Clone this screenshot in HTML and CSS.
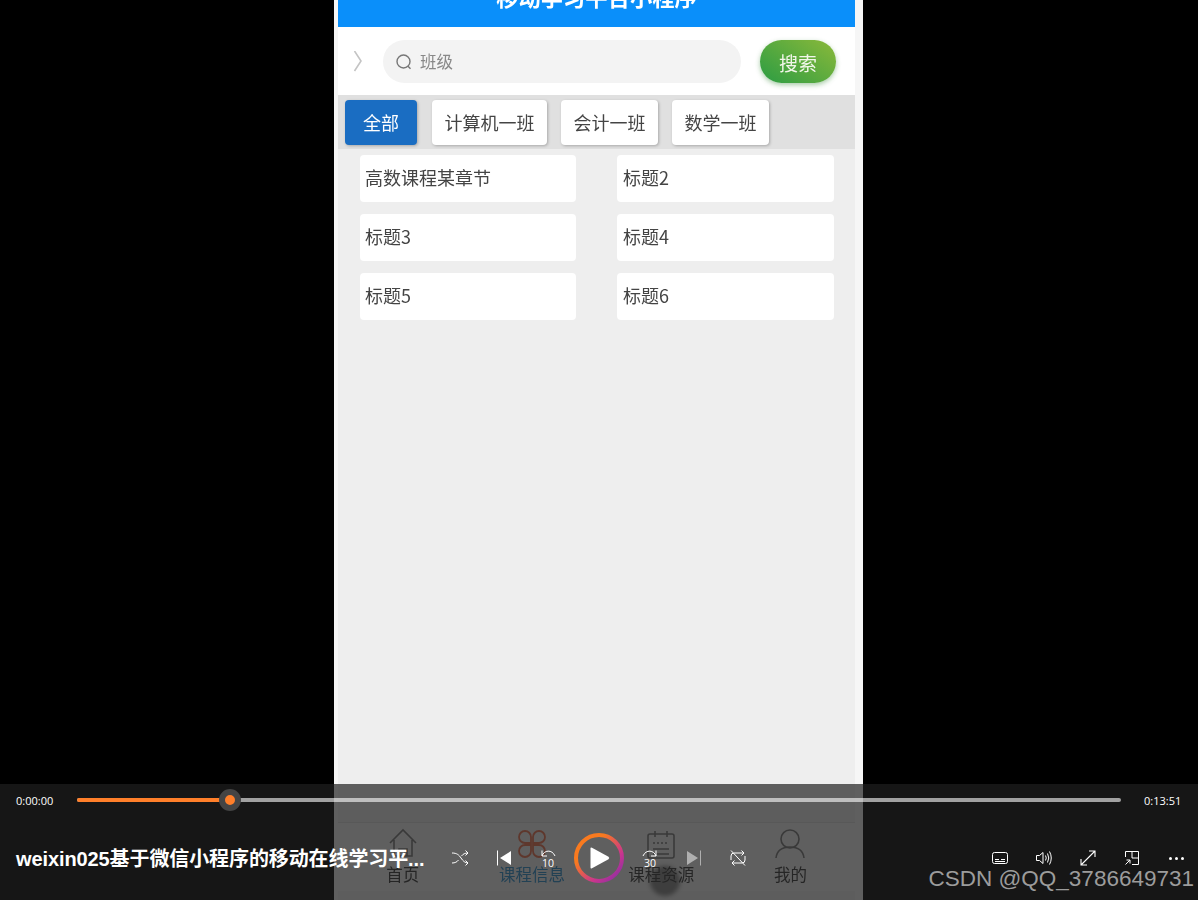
FILE: index.html
```html
<!DOCTYPE html>
<html lang="zh">
<head>
    <meta charset="UTF-8">
    <meta name="viewport" content="width=device-width, initial-scale=1.0">
    <title>weixin025</title>
    <link rel="stylesheet" href="styles.css">
</head>
<body>

<div class="video">
    <div class="phone">
        <div class="screen">
            <header class="app-title"><span>移动学习平台小程序</span></header>

            <div class="search-row">
                <span class="chevron">
                    <svg width="10" height="22" viewBox="0 0 10 22"><path d="M1.5 0 L8 10 L1.5 20" fill="none" stroke="#c4c4c4" stroke-width="1.6"/></svg>
                </span>
                <div class="search-box">
                    <svg width="18" height="18" viewBox="0 0 18 18"><circle cx="8.5" cy="8.5" r="6.5" fill="none" stroke="#777" stroke-width="1.4"/><path d="M13 13.2 L15.5 15.8" stroke="#777" stroke-width="1.4"/></svg>
                    <span class="placeholder">班级</span>
                </div>
                <div class="search-btn">搜索</div>
            </div>

            <div class="tabs">
                <div class="tab active">全部</div>
                <div class="tab tab-5">计算机一班</div>
                <div class="tab tab-4a">会计一班</div>
                <div class="tab tab-4b">数学一班</div>
            </div>

            <div class="course-grid">
                <div class="course">高数课程某章节</div>
                <div class="course">标题2</div>
                <div class="course">标题3</div>
                <div class="course">标题4</div>
                <div class="course">标题5</div>
                <div class="course">标题6</div>
            </div>

            <nav class="tabbar">
                <div class="float-dot"></div>
                <div class="tabbar-item">
                    <svg width="34" height="34" viewBox="0 0 34 34"><path d="M4 15 L17 2 L30 15 M8 12 V28 H26 V12 M13 28 V21 H21 V28" fill="none" stroke="#777" stroke-width="1.6"/></svg>
                    <span>首页</span>
                </div>
                <div class="tabbar-item current">
                    <svg width="34" height="34" viewBox="0 0 34 34"><g fill="none" stroke="#f0704c" stroke-width="1.8"><path d="M16 15 H10 A6 6 0 1 1 16 9 Z"/><path d="M18 15 V9 A6 6 0 1 1 24 15 Z"/><path d="M16 17 V23 A6 6 0 1 1 10 17 Z"/><path d="M18 17 H24 A6 6 0 1 1 18 23 Z"/></g></svg>
                    <span>课程信息</span>
                </div>
                <div class="tabbar-item">
                    <svg width="34" height="34" viewBox="0 0 34 34"><g fill="none" stroke="#777" stroke-width="1.6"><rect x="4" y="6" width="26" height="24" rx="2"/><path d="M11 3 V9 M23 3 V9 M9 21 H25 M9 26 H25"/><path d="M9 15 H25" stroke-dasharray="2 2"/></g></svg>
                    <span>课程资源</span>
                </div>
                <div class="tabbar-item">
                    <svg width="34" height="34" viewBox="0 0 34 34"><g fill="none" stroke="#777" stroke-width="1.6"><circle cx="17" cy="11" r="9"/><path d="M3 30 C4 22 10 19 17 19 C24 19 30 22 31 30"/></g></svg>
                    <span>我的</span>
                </div>
            </nav>
        </div>
    </div>

    <div class="player">
        <div class="seek-row">
            <span class="time time-start">0:00:00</span>
            <div class="track">
                <div class="track-done" style="width:14.7%"></div>
                <div class="thumb"></div>
            </div>
            <span class="time time-end">0:13:51</span>
        </div>

        <div class="ctrl-row">
            <div class="video-name">weixin025基于微信小程序的移动在线学习平...</div>

            <div class="ctrls">
                <div class="ctrl">
                    <svg width="20" height="20" viewBox="0 0 20 20"><g fill="none" stroke="#fff" stroke-width="1"><path d="M2 5 C7 5 9 7 11 10 C13 13 15 15 18 15 M2 15 C5 15 7 14 8.500 12 M11.500 8 C13 6 15 5 18 5"/><path d="M15.500 2.500 L18 5 L15.500 7.500 M15.500 12.500 L18 15 L15.500 17.500"/></g></svg>
                </div>
                <div class="ctrl">
                    <svg width="18" height="18" viewBox="0 0 18 18"><path d="M2.500 1.500 V16.500" stroke="#fff" stroke-width="1"/><path d="M16 2 V16 L5 9 Z" fill="#fff"/></svg>
                </div>
                <div class="ctrl skip">
                    <svg width="20" height="9" viewBox="0 0 20 9"><path d="M4 7 C6 1 14 0 17 7 M4 1.500 V7 H9" fill="none" stroke="#fff" stroke-width="1"/></svg>
                    <span>10</span>
                </div>
                <div class="ctrl play">
                    <svg width="50" height="50" viewBox="0 0 50 50">
                        <defs>
                            <linearGradient id="ring" x1="0" y1="0" x2="1" y2="1">
                                <stop offset="0.3" stop-color="#f97a1f"/>
                                <stop offset="0.7" stop-color="#c8348f"/>
                                <stop offset="1" stop-color="#7d2fa8"/>
                            </linearGradient>
                        </defs>
                        <circle cx="25" cy="25" r="23" fill="none" stroke="url(#ring)" stroke-width="4"/>
                        <path d="M16.500 15.500 Q16.500 14 18 14.800 L34.500 23.800 Q36 25 34.500 26.200 L18 35.200 Q16.500 36 16.500 34.500 Z" fill="#fff"/>
                    </svg>
                </div>
                <div class="ctrl skip">
                    <svg width="20" height="9" viewBox="0 0 20 9"><path d="M16 7 C14 1 6 0 3 7 M16 1.500 V7 H11" fill="none" stroke="#fff" stroke-width="1"/></svg>
                    <span>30</span>
                </div>
                <div class="ctrl dim">
                    <svg width="18" height="18" viewBox="0 0 18 18"><path d="M15.500 1.500 V16.500" stroke="#fff" stroke-width="1"/><path d="M2 2 V16 L13 9 Z" fill="#fff"/></svg>
                </div>
                <div class="ctrl">
                    <svg width="20" height="20" viewBox="0 0 20 20"><g fill="none" stroke="#fff" stroke-width="1"><path d="M3 12 V8 Q3 5 6 5 H16 M17 8 V12 Q17 15 14 15 H4"/><path d="M13.500 2.500 L16 5 L13.500 7.500 M6.500 12.500 L4 15 L6.500 17.500 M3 2.500 L17 17.500"/></g></svg>
                </div>
            </div>

            <div class="ctrls-right">
                <div class="ctrl">
                    <svg width="18" height="14" viewBox="0 0 18 14"><g fill="none" stroke="#fff" stroke-width="1"><rect x="1.500" y="1.500" width="15" height="11" rx="2"/><path d="M4 8.500 H8 M10 8.500 H14 M4 10.500 H14"/></g></svg>
                </div>
                <div class="ctrl">
                    <svg width="18" height="16" viewBox="0 0 18 16"><g fill="none" stroke="#fff" stroke-width="1"><path d="M1.500 5.500 H4.500 L8 2.500 V13.500 L4.500 10.500 H1.500 Z"/><path d="M10.500 5.500 Q12 8 10.500 10.500 M12.500 3.500 Q15 8 12.500 12.500 M14.500 1.500 Q18 8 14.500 14.500"/></g></svg>
                </div>
                <div class="ctrl">
                    <svg width="16" height="16" viewBox="0 0 16 16"><path d="M1 15 L15 1 M9 1 H15 V7 M1 9 V15 H7" fill="none" stroke="#fff" stroke-width="1.100"/></svg>
                </div>
                <div class="ctrl">
                    <svg width="16" height="16" viewBox="0 0 16 16"><path d="M1.500 7 V1.500 H14.500 V14.500 H8 M8 1.500 V8 H14.500 M1.500 14.500 L6 10 M2.500 10 H6 V13.500" fill="none" stroke="#fff" stroke-width="1"/></svg>
                </div>
                <div class="ctrl more"><i></i><i></i><i></i></div>
            </div>
        </div>
    </div>

    <div class="watermark">CSDN @QQ_3786649731</div>
</div>

</body>
</html>
```

FILE: styles.css
```css
* {
    box-sizing: border-box;
}

body {
    margin: 0;
    background: #000;
    font-family: "Noto Sans CJK SC", "Liberation Sans", sans-serif;
}

.video {
    position: relative;
    width: 1198px;
    height: 900px;
    overflow: hidden;
    background: #000;
}

/* --- phone recording --- */
.phone {
    width: 529px;
    height: 900px;
    margin-left: 334px;
    padding: 0 8px 0 4px;
    background: #f6f6f6;
    filter: blur(0.4px);
}

.screen {
    display: flex;
    flex-direction: column;
    height: 100%;
    background: #eeeeee;
}

.app-title {
    display: flex;
    flex: none;
    justify-content: center;
    align-items: flex-end;
    height: 28px;
    padding-bottom: 15px;
    overflow: hidden;
    background: #0a8ffa;
    border-bottom: 1px solid #fff;
    color: #fff;
    font-size: 22.3px;
    font-weight: bold;
    line-height: 32px;
}

.search-row {
    display: flex;
    flex: none;
    align-items: center;
    height: 67px;
    padding: 0 19px 0 15px;
    background: #fff;
}

.chevron {
    display: flex;
    width: 30px;
}

.search-box {
    display: flex;
    align-items: center;
    gap: 7px;
    width: 358px;
    height: 43px;
    padding-left: 12px;
    background: #f3f3f3;
    border-radius: 22px;
    color: #888;
    font-size: 16.5px;
}

.placeholder {
    margin-bottom: 2px;
}

.search-btn {
    width: 76px;
    height: 43px;
    margin-left: 19px;
    background: linear-gradient(35deg, #2b9c43, #8bb93a);
    border-radius: 22px;
    box-shadow: 0 2px 5px rgba(60, 140, 60, 0.45);
    color: #f2f6ea;
    font-size: 19px;
    line-height: 45px;
    text-align: center;
}

.tabs {
    display: flex;
    flex: none;
    align-items: center;
    height: 54px;
    padding-left: 7px;
    background: #e0e0e0;
}

.tab {
    width: 115px;
    height: 45px;
    margin-right: 14px;
    background: #fff;
    border-radius: 4px;
    box-shadow: 1px 1px 3px rgba(0, 0, 0, 0.25);
    color: #444;
    font-size: 18px;
    line-height: 45px;
    text-align: center;
}

.tab.active {
    width: 72px;
    margin-right: 15px;
    background: #1a6dc2;
    color: #fff;
}

.tab-4a,
.tab-4b {
    width: 97px;
}

.course-grid {
    display: grid;
    flex: 1;
    grid-template-columns: 216px 217px;
    grid-auto-rows: 47px;
    align-content: start;
    column-gap: 41px;
    row-gap: 12px;
    padding: 6px 0 0 22px;
}

.course {
    padding-left: 6px;
    background: #fff;
    border-radius: 4px;
    color: #444;
    font-size: 18px;
    line-height: 45px;
}

.course:nth-child(odd) {
    padding-left: 5px;
}

.tabbar {
    position: relative;
    display: flex;
    flex: none;
    height: 69px;
    margin-bottom: 9px;
    background: #f3f3f3;
    border-top: 1px solid #ddd;
}

.tabbar-item {
    position: relative;
    display: flex;
    flex: 1;
    flex-direction: column;
    align-items: center;
    padding-top: 5px;
    color: #333;
    font-size: 16.5px;
    line-height: 22px;
}

.tabbar-item svg {
    display: block;
    margin-bottom: 1px;
}

.tabbar-item.current {
    color: #2a8fd0;
}

.float-dot {
    position: absolute;
    left: 312px;
    top: 43px;
    width: 30px;
    height: 30px;
    background: rgba(0, 0, 0, 0.45);
    border-radius: 50%;
    filter: blur(2px);
}

/* --- player controls --- */
.player {
    position: absolute;
    left: 0;
    right: 0;
    bottom: 0;
    height: 116px;
    background: rgba(31, 31, 31, 0.7);
    color: #fff;
}

.seek-row {
    display: flex;
    align-items: center;
    height: 32px;
}

.time {
    font-family: "Open Sans", "Liberation Sans", sans-serif;
    font-size: 11px;
}

.time-start {
    width: 77px;
    padding-left: 16px;
}

.time-end {
    width: 77px;
    padding-left: 23px;
}

.track {
    position: relative;
    flex: 1;
    height: 4px;
    background: rgba(255, 255, 255, 0.6);
    border-radius: 2px;
}

.track-done {
    height: 100%;
    background: #ff7f2a;
    border-radius: 2px;
}

.thumb {
    position: absolute;
    left: 142px;
    top: -9px;
    width: 22px;
    height: 22px;
    background: #ff7f2a;
    border: 6px solid #444;
    border-radius: 50%;
}

.ctrl-row {
    display: flex;
    align-items: center;
    height: 84px;
}

.video-name {
    width: 438px;
    margin-top: -2px;
    padding-left: 16px;
    font-family: "Liberation Sans", "Noto Sans CJK SC", sans-serif;
    font-size: 20px;
    font-weight: bold;
    letter-spacing: -0.1px;
    white-space: nowrap;
}

.ctrls,
.ctrls-right {
    display: flex;
    align-items: center;
}

.ctrls-right {
    margin-left: auto;
}

.ctrl {
    display: flex;
    flex-direction: column;
    justify-content: center;
    align-items: center;
    width: 44px;
    height: 44px;
}

.ctrl svg {
    flex: none;
}

.ctrl.play {
    width: 58px;
}

.ctrl.dim {
    opacity: 0.5;
}

.skip {
    font-family: "Open Sans", sans-serif;
    font-size: 10.5px;
    line-height: 10px;
}

.more {
    flex-direction: row;
    gap: 3px;
}

.more i {
    width: 3px;
    height: 3px;
    background: #fff;
    border-radius: 50%;
}

.watermark {
    position: absolute;
    right: 4px;
    bottom: 6px;
    color: #9c9c9c;
    font-family: "Liberation Sans", sans-serif;
    font-size: 22.5px;
    line-height: 30px;
}
```
